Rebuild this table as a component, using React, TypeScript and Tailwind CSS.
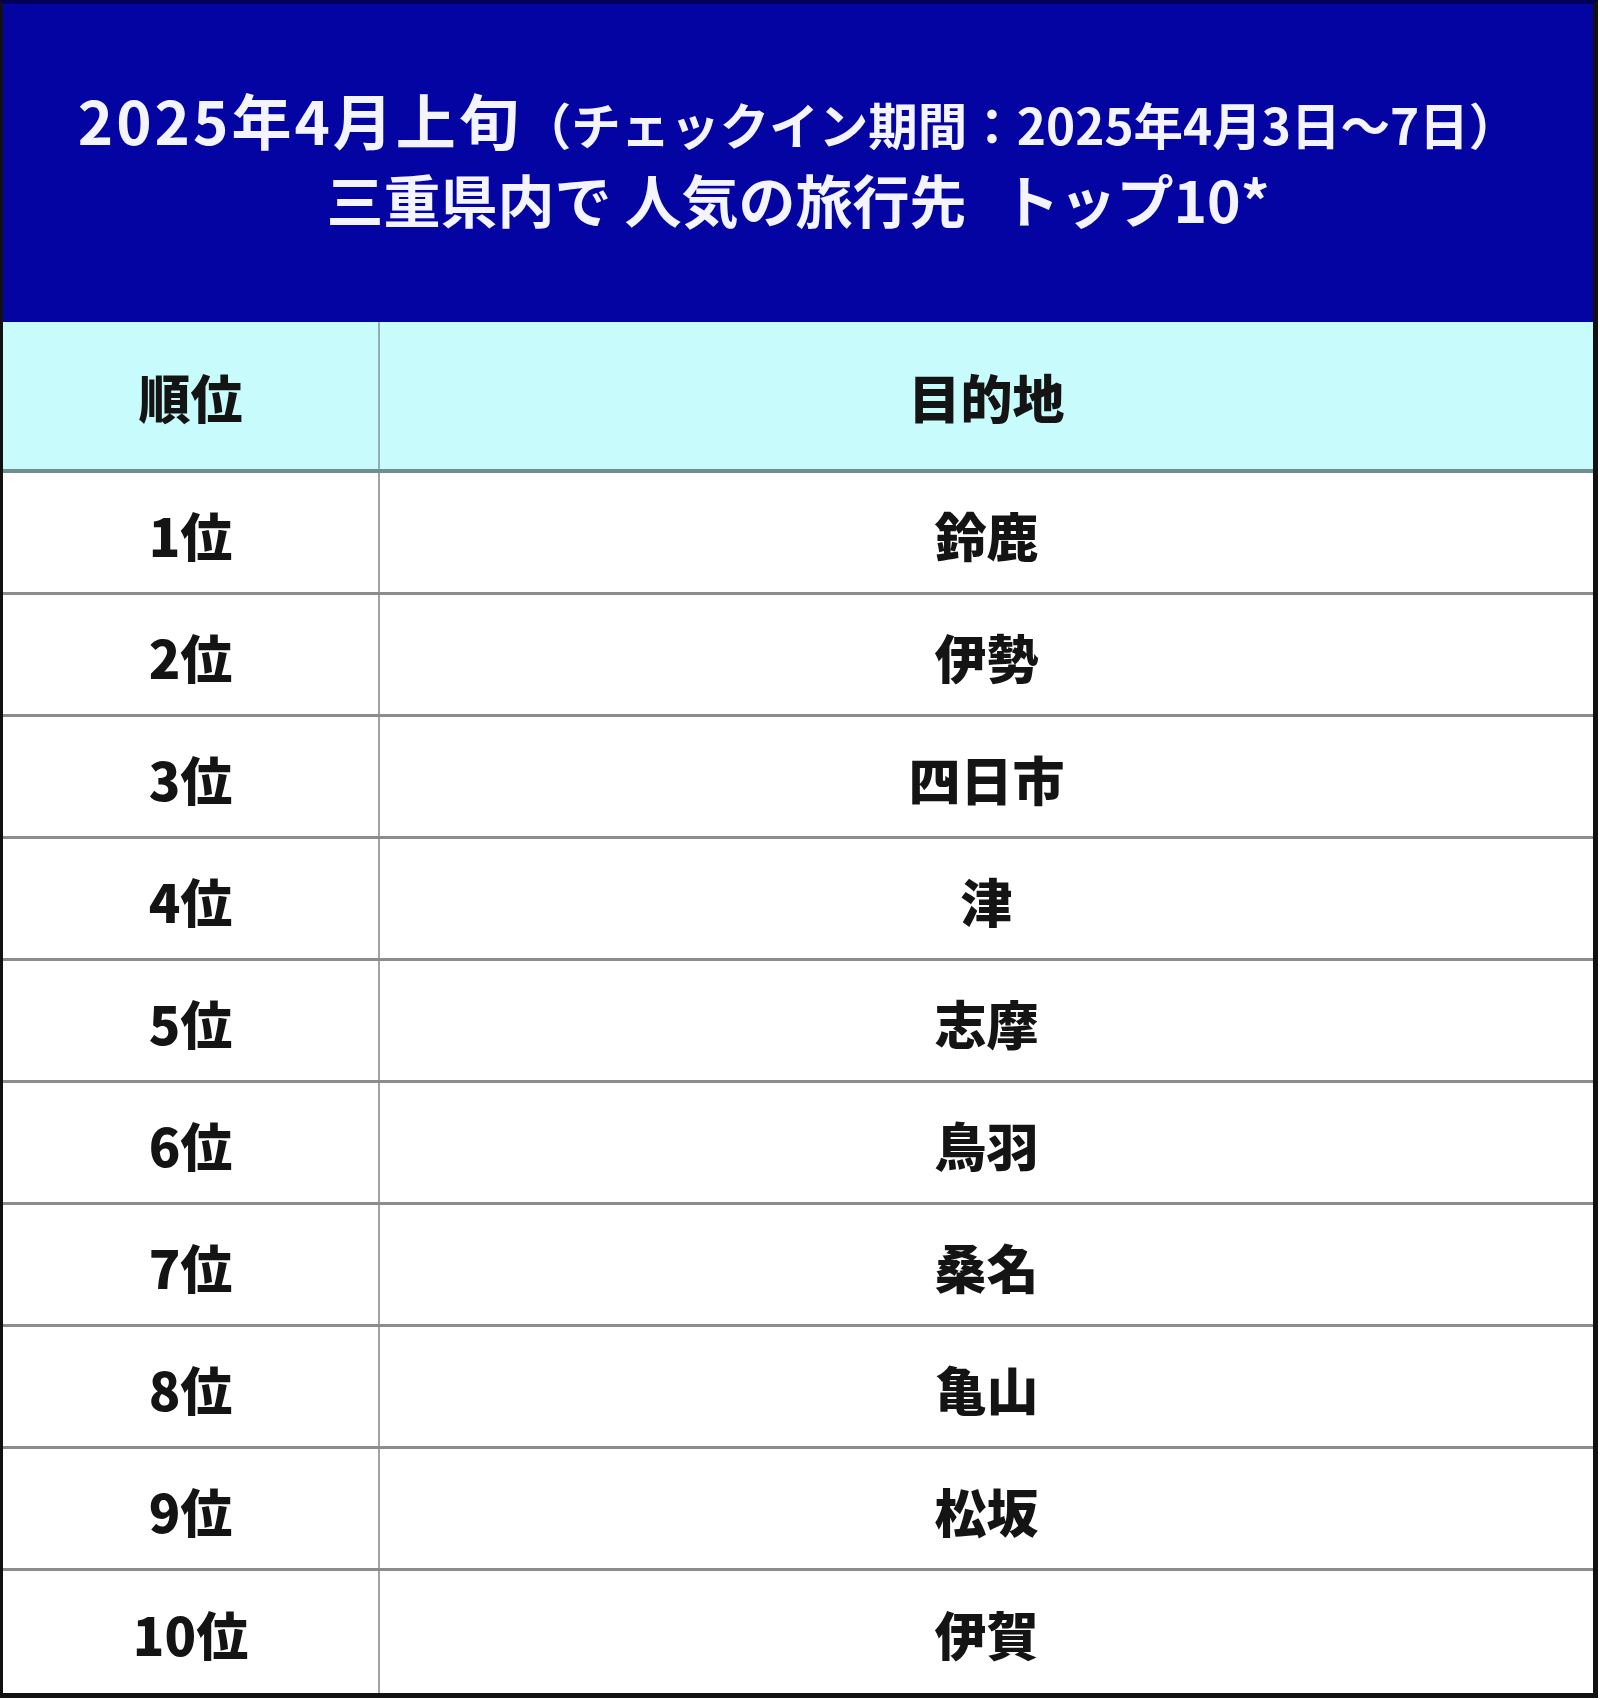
const ranking = [
  { rank: '1位', place: '鈴鹿' },
  { rank: '2位', place: '伊勢' },
  { rank: '3位', place: '四日市' },
  { rank: '4位', place: '津' },
  { rank: '5位', place: '志摩' },
  { rank: '6位', place: '鳥羽' },
  { rank: '7位', place: '桑名' },
  { rank: '8位', place: '亀山' },
  { rank: '9位', place: '松坂' },
  { rank: '10位', place: '伊賀' },
]

export default function App() {
  return (
    <div className="min-h-[1700px] w-[1600px] bg-white font-['Noto_Sans_CJK_JP',sans-serif]">
      <div className="w-[1598px] border-t-[4px] border-r-[5px] border-b-[5px] border-l-[3px] border-t-[#00005c] border-r-[#111111] border-b-[#111111] border-l-[#111111]">
        {/* タイトル */}
        <div className="flex h-[318px] flex-col items-center justify-center bg-[#0404a2] pb-[9px] font-bold text-[#f4f4ff]">
          <div className="flex h-[80px] items-center">
            <div className="flex items-baseline whitespace-nowrap leading-none">
              <span className="text-[60px] tracking-[3px]">2025年4月上旬</span>
              <span className="text-[49.5px]">（チェックイン期間：2025年4月3日～7日）</span>
            </div>
          </div>
          <div className="flex h-[80px] items-center">
            <div className="whitespace-nowrap text-[57px] leading-none">
              三重県内で 人気の旅行先<span className="ml-[36px]">トップ10*</span>
            </div>
          </div>
        </div>

        {/* 表ヘッダー */}
        <div className="grid h-[151px] grid-cols-[377px_1fr] border-b-[4px] border-[#6f8e8e] bg-[#c8fbfc] text-[52px] font-black text-[#141414]">
          <div className="flex items-center justify-center border-r-2 border-[#8fb1b1] pt-[2px]">順位</div>
          <div className="flex items-center justify-center pt-[2px]">目的地</div>
        </div>

        {/* 順位一覧 */}
        {ranking.map((row, i) => (
          <div
            key={row.rank}
            className={`grid h-[122px] grid-cols-[377px_1fr] text-[52px] font-black text-[#141414] ${
              i < ranking.length - 1 ? 'border-b-[3px] border-[#8c8c8c]' : ''
            }`}
          >
            <div className="flex items-center justify-center border-r-2 border-[#a3a3a3] pt-[4px]">{row.rank}</div>
            <div className="flex items-center justify-center pt-[4px]">{row.place}</div>
          </div>
        ))}
      </div>
    </div>
  )
}
